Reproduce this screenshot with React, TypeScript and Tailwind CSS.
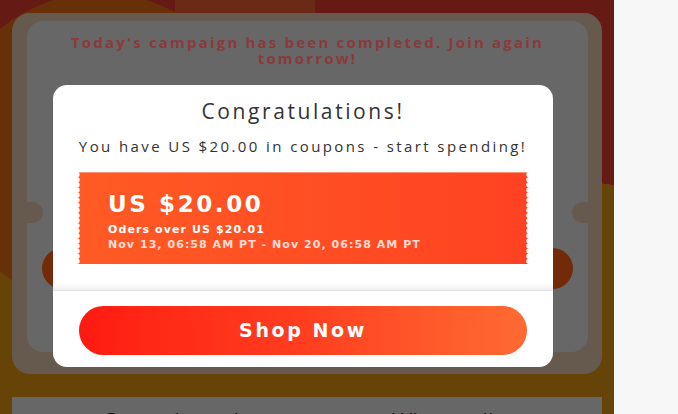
import React from 'react';

const TEETH = Array.from({ length: 18 }, (_, i) => 2.6 + i * 5.1);

const Scallops: React.FC<{ side: 'left' | 'right' }> = ({ side }) => (
    <svg
        className={side === 'left' ? 'absolute -top-px left-0' : 'absolute -top-px right-0'}
        width="4"
        height="92"
        viewBox="0 0 4 92"
    >
        {TEETH.map(y => (
            <circle key={y} cx={side === 'left' ? 0 : 4} cy={y} r="2.7" fill="#fff" />
        ))}
    </svg>
);

const Coupon: React.FC = () => (
    <div className="relative mx-[24px] mt-[16px] h-[92px] border-t border-[#ff9273] bg-gradient-to-r from-[#ff5a24] to-[#ff4222] pl-[31px] pt-[17px] text-white font-['DejaVu_Sans',sans-serif]">
        <Scallops side="left" />
        <Scallops side="right" />
        <p className="text-[23px] font-bold leading-[29px] tracking-[2.6px]">US $20.00</p>
        <p className="mt-[3px] text-[11px] font-bold leading-[15px] tracking-[1.1px]">Oders over US $20.01</p>
        <p className="text-[11px] font-bold leading-[15px] tracking-[1.05px] text-white/80">Nov 13, 06:58 AM PT - Nov 20, 06:58 AM PT</p>
    </div>
);

const RewardModal: React.FC = () => (
    <div className="absolute left-[53px] top-[85px] w-[500px] overflow-hidden rounded-[14px] bg-white">
        <div className="pt-[12px] text-center text-[#333]">
            <h2 className="text-[21px] leading-[28px] tracking-[2.6px]">Congratulations!</h2>
            <p className="mt-[11px] text-[15px] leading-[20px] tracking-[2.4px]">You have US $20.00 in coupons - start spending!</p>
        </div>
        <Coupon />
        <div className="mt-[19px] h-[8px] border-b border-[#e2e2e2] bg-gradient-to-b from-white to-[#efefef]" />
        <div className="px-[26px] pb-[12px] pt-[15px]">
            <button className="flex h-[49px] w-full items-center justify-center rounded-full bg-gradient-to-r from-[#ff1911] via-[#ff3d1f] to-[#ff6a32] font-['DejaVu_Sans',sans-serif] text-[19px] font-bold tracking-[2.6px] text-white">
                Shop Now
            </button>
        </div>
    </div>
);

const App: React.FC = () => {
    return (
        <div className="flex h-[414px] w-[678px] overflow-hidden bg-[#f7f7f7] font-['Open_Sans',sans-serif]">
            <div className="relative w-[614px] shrink-0 overflow-hidden bg-[linear-gradient(188deg,#661a14_0_37%,#664408_37%)]">
                {/* page decorations, dimmed by the backdrop */}
                <div className="absolute -left-[57px] -top-[7px] h-[314px] w-[314px] rounded-full bg-[#683009]" />
                <div className="absolute left-[175px] top-0 h-[30px] w-[140px] bg-[#6a2a16]" />

                <div className="relative flex flex-col gap-[23px] px-[12px] pt-[13px]">
                    <div className="rounded-[18px] bg-[#655a4d] pb-[22px] pl-[15px] pr-[14px] pt-[8px]">
                        <div className="relative h-[331px] rounded-[16px] bg-[#676767] pt-[13px]">
                            <div className="absolute left-0 top-[181px] h-[21px] w-[16px] rounded-r-full bg-[#655a4d]" />
                            <div className="absolute right-0 top-[181px] h-[21px] w-[16px] rounded-l-full bg-[#655a4d]" />
                            <p className="px-[22px] text-center text-[15px] font-bold leading-[16px] tracking-[2.2px] text-[#8a3a3a]">
                                Today's campaign has been completed. Join again tomorrow!
                            </p>
                            <div className="mx-[15px] mt-[182px] h-[41px] rounded-full bg-[#732a09]" />
                        </div>
                    </div>
                    <div className="h-[60px] bg-[#676767] pt-[8px]">
                        <div className="flex justify-center gap-[130px] text-[22px] leading-[30px] text-[#151515]">
                            <span>Campaign rules</span>
                            <span>Winners list</span>
                        </div>
                    </div>
                </div>

                <RewardModal />
            </div>
        </div>
    );
};

export default App;
